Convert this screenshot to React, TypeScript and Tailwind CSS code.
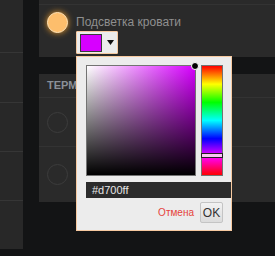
import { useState } from 'react'

function Swatch({ color }: { color: string }) {
  return (
    <div className="ml-[37px] mt-[3px] flex h-[23px] w-[42px] items-center rounded-[1px] border border-[#f6c9a0] bg-[#ececec] pl-[3px]">
      <div className="h-[18px] w-[22px] border border-[#3a3a3a]" style={{ backgroundColor: color }} />
      <svg className="ml-[5px]" width="7" height="6" viewBox="0 0 7 6">
        <polygon points="0,0 7,0 3.5,5" fill="#111" />
      </svg>
    </div>
  )
}

function ColorPicker({ color }: { color: string }) {
  return (
    <div className="absolute left-[76px] top-[56px] h-[175px] w-[156px] border border-[#f6c9a0] bg-[#ececec] pl-[9px] pt-[8px]">
      <div className="flex gap-[5px]">
        <div className="relative h-[111px] w-[110px] border border-[#737373] bg-[linear-gradient(to_top,#000,transparent),linear-gradient(to_right,#fff,#d700ff)]">
          <div className="absolute right-[-4px] top-[-4px] size-[8px] rounded-full border border-white bg-black" />
        </div>
        <div className="relative h-[111px] w-[22px] border border-[#737373] bg-[linear-gradient(to_bottom,#f00,#ff0,#0f0,#0ff,#00f,#f0f,#f00)]">
          <div className="absolute left-[-1px] right-[-1px] top-[87px] h-[5px] border border-[#222] bg-[#f9c4f2]" />
        </div>
      </div>
      <div className="mt-[6px] flex h-[16px] items-center bg-[#2b2b2b] pl-[6px] text-[11px] text-[#e6e6e6]">
        {color}
      </div>
      <div className="mt-[4px] flex items-center justify-end pr-[8px]">
        <span className="mr-[6px] text-[10px] text-[#e5433b]">Отмена</span>
        <button
          type="button"
          className="h-[21px] w-[23px] rounded-[2px] border border-[#c4c4c4] bg-[linear-gradient(to_bottom,#f2f2f2,#dcdcdc)] text-[12px] text-[#333]"
        >
          OK
        </button>
      </div>
    </div>
  )
}

export default function App() {
  const [color] = useState('#d700ff')

  return (
    <div className="relative flex h-[256px] w-[275px] overflow-hidden bg-[#131415] font-['Liberation_Sans',Arial,sans-serif]">
      <div className="flex h-[249px] w-[23px] flex-col bg-[#282828]">
        <div className="h-[53px] border-b border-[#363636]" />
        <div className="h-[50px] border-b border-[#363636]" />
        <div className="h-[49px] border-b border-[#363636]" />
        <div className="h-[49px] border-b border-[#363636]" />
        <div className="flex-1" />
      </div>

      <div className="ml-[16px] flex flex-1 flex-col">
        <div className="h-[57px] bg-[#2a2a2a]">
          <div className="h-[5px] border-b border-[#333]" />
          <div className="flex items-start pl-[8px] pt-[7px]">
            <div className="size-[21px] shrink-0 rounded-full border border-[#ffe3b8] bg-[#fdbe6c] shadow-[0_0_6px_#e89a2c]" />
            <div className="flex flex-col">
              <span className="ml-[8px] mt-[4px] text-[12px] leading-[12px] text-[#8f8f8f]">Подсветка кровати</span>
              <div className="-ml-[29px]">
                <Swatch color={color} />
              </div>
            </div>
          </div>
        </div>

        <div className="mt-[17px] flex h-[128px] flex-col bg-[#2a2a2a]">
          <div className="flex h-[24px] items-center border-b border-[#333] pl-[8px] text-[11px] font-bold text-[#8a9098]">
            ТЕРМОСТАТ
          </div>
          <div className="flex h-[49px] items-center border-b border-[#333] pl-[8px]">
            <div className="size-[21px] rounded-full border border-[#3c3c3c]" />
          </div>
          <div className="flex flex-1 items-center pl-[8px]">
            <div className="size-[21px] rounded-full border border-[#3c3c3c]" />
          </div>
        </div>
      </div>

      <ColorPicker color={color} />
    </div>
  )
}
